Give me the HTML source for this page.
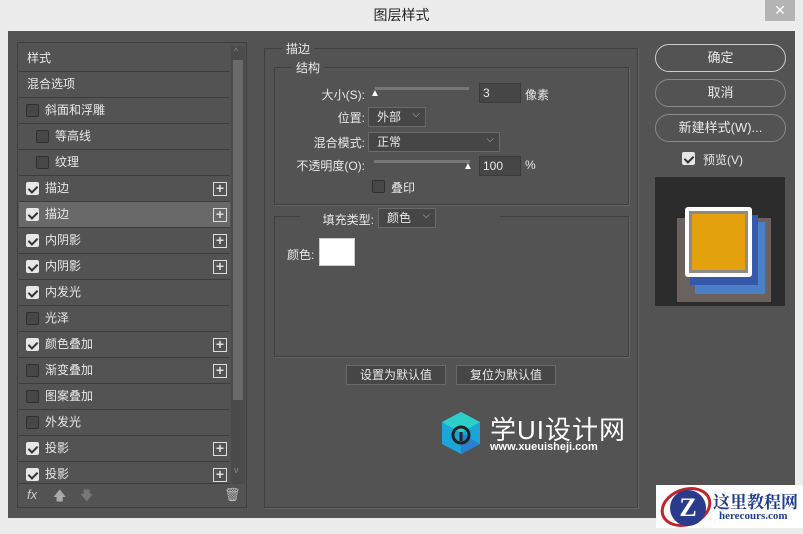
<!DOCTYPE html>
<html><head><meta charset="utf-8"><style>
*{margin:0;padding:0;box-sizing:border-box}
body{width:803px;height:528px;background:#ececec;position:relative;overflow:hidden;font-family:"Liberation Sans","Noto Sans CJK SC",sans-serif;font-size:12px;color:#e8e8e8}
.a{position:absolute}
.title{left:0;top:0;width:803px;height:31px;text-align:center;line-height:31px;font-size:14px;color:#222}
.close{left:765px;top:0;width:30px;height:21px;background:#b4b4b4;color:#fff;text-align:center;line-height:21px;font-size:14px}
.body{left:8px;top:31px;width:787px;height:487px;background:#535353}
.lp{left:17px;top:42px;width:230px;height:466px;border:1px solid #3e3e3e}
.row{position:absolute;left:19px;width:211px;height:26px;border-bottom:1px solid #3c3c3c;line-height:25px;font-size:12px}
.cb{position:absolute;top:6px;width:13px;height:13px;border:1px solid #2f2f2f;background:#474747;border-radius:2px}
.cb.on{background:#e6e6e6;border-color:#e6e6e6}
.cb.on::after{content:"";position:absolute;left:3px;top:1px;width:4px;height:7px;border:solid #333;border-width:0 2px 2px 0;transform:rotate(45deg)}
.plus{position:absolute;right:3px;top:6px;width:14px;height:14px;border:1px solid #ddd;text-align:center;line-height:11px;font-size:14px;font-weight:bold;color:#ddd}
.btn{position:absolute;left:655px;width:131px;height:28px;border:1px solid #8a8a8a;border-radius:14px;text-align:center;line-height:26px;font-size:13px}
.inp{position:absolute;background:#464646;border:1px solid #3a3a3a;height:20px;line-height:18px;padding-left:3px}
.sel{position:absolute;background:#464646;border:1px solid #6a6a6a;height:20px;line-height:18px;padding-left:8px}
.sel::after{content:"⌵";position:absolute;right:5px;top:-2px;font-size:10px;color:#bbb}
.lbl{position:absolute;text-align:right;font-size:12px}
.box{position:absolute;border:1px solid #3f3f3f;box-shadow:1px 1px 0 #666}
.gbtn{position:absolute;height:20px;background:#464646;border:1px solid #6a6a6a;text-align:center;line-height:18px}
</style></head><body>
<div class="a title">图层样式</div>
<div class="a close">✕</div>
<div class="a body"></div>
<div class="a lp"></div>
<div class="a" style="left:231px;top:46px;width:14px;height:438px;background:#4b4b4b"></div>
<div class="a" style="left:233px;top:60px;width:10px;height:340px;background:#6a6a6a"></div>
<div class="a" style="left:234px;top:46px;font-size:9px;color:#888">^</div>
<div class="a" style="left:234px;top:465px;font-size:9px;color:#888">v</div>

<div class="row" style="top:46px"><span style="margin-left:8px">样式</span></div>
<div class="row" style="top:72px"><span style="margin-left:8px">混合选项</span></div>
<div class="row" style="top:98px"><div class="cb" style="left:7px"></div><span style="margin-left:26px">斜面和浮雕</span></div>
<div class="row" style="top:124px"><div class="cb" style="left:17px"></div><span style="margin-left:36px">等高线</span></div>
<div class="row" style="top:150px"><div class="cb" style="left:17px"></div><span style="margin-left:36px">纹理</span></div>
<div class="row" style="top:176px"><div class="cb on" style="left:7px"></div><span style="margin-left:26px">描边</span><div class="plus">+</div></div>
<div class="row" style="top:202px;background:#696969"><div class="cb on" style="left:7px"></div><span style="margin-left:26px">描边</span><div class="plus">+</div></div>
<div class="row" style="top:228px"><div class="cb on" style="left:7px"></div><span style="margin-left:26px">内阴影</span><div class="plus">+</div></div>
<div class="row" style="top:254px"><div class="cb on" style="left:7px"></div><span style="margin-left:26px">内阴影</span><div class="plus">+</div></div>
<div class="row" style="top:280px"><div class="cb on" style="left:7px"></div><span style="margin-left:26px">内发光</span></div>
<div class="row" style="top:306px"><div class="cb" style="left:7px"></div><span style="margin-left:26px">光泽</span></div>
<div class="row" style="top:332px"><div class="cb on" style="left:7px"></div><span style="margin-left:26px">颜色叠加</span><div class="plus">+</div></div>
<div class="row" style="top:358px"><div class="cb" style="left:7px"></div><span style="margin-left:26px">渐变叠加</span><div class="plus">+</div></div>
<div class="row" style="top:384px"><div class="cb" style="left:7px"></div><span style="margin-left:26px">图案叠加</span></div>
<div class="row" style="top:410px"><div class="cb" style="left:7px"></div><span style="margin-left:26px">外发光</span></div>
<div class="row" style="top:436px"><div class="cb on" style="left:7px"></div><span style="margin-left:26px">投影</span><div class="plus">+</div></div>
<div class="row" style="top:462px;height:22px"><div class="cb on" style="left:7px"></div><span style="margin-left:26px">投影</span><div class="plus">+</div></div>
<div class="a" style="left:27px;top:487px;font-style:italic;font-size:13px;color:#ccc">fx</div>
<div class="a" style="left:53px;top:487px;font-size:13px;color:#aaa">🡅</div>
<div class="a" style="left:80px;top:487px;font-size:13px;color:#777">🡇</div>
<div class="a" style="left:224px;top:487px;font-size:13px;color:#bbb">🗑</div>

<div class="box" style="left:264px;top:48px;width:374px;height:460px"></div>
<div class="a" style="left:282px;top:40px;background:#535353;padding:0 4px;font-size:12px">描边</div>
<div class="box" style="left:274px;top:67px;width:355px;height:138px"></div>
<div class="a" style="left:292px;top:59px;background:#535353;padding:0 4px">结构</div>
<div class="lbl" style="left:290px;top:86px;width:75px">大小(S):</div>
<div class="a" style="left:375px;top:87px;width:94px;height:3px;background:#777"></div>
<div class="a" style="left:370px;top:88px;color:#fff;font-size:10px">▲</div>
<div class="inp" style="left:479px;top:83px;width:42px">3</div>
<div class="a" style="left:525px;top:86px">像素</div>
<div class="lbl" style="left:290px;top:109px;width:75px">位置:</div>
<div class="sel" style="left:368px;top:107px;width:58px">外部</div>
<div class="lbl" style="left:290px;top:134px;width:75px">混合模式:</div>
<div class="sel" style="left:368px;top:132px;width:132px">正常</div>
<div class="lbl" style="left:280px;top:157px;width:85px">不透明度(O):</div>
<div class="a" style="left:374px;top:160px;width:96px;height:3px;background:#777"></div>
<div class="a" style="left:463px;top:161px;color:#fff;font-size:10px">▲</div>
<div class="inp" style="left:479px;top:156px;width:42px">100</div>
<div class="a" style="left:525px;top:158px">%</div>
<div class="cb" style="left:372px;top:180px"></div>
<div class="a" style="left:391px;top:179px">叠印</div>

<div class="box" style="left:274px;top:216px;width:355px;height:141px"></div>
<div class="a" style="left:300px;top:208px;width:200px;height:20px;background:#535353"></div>
<div class="lbl" style="left:290px;top:211px;width:84px">填充类型:</div>
<div class="sel" style="left:378px;top:208px;width:58px">颜色</div>
<div class="a" style="left:287px;top:246px">颜色:</div>
<div class="a" style="left:319px;top:238px;width:36px;height:28px;background:#fff;border:1px solid #ccc"></div>

<div class="gbtn" style="left:346px;top:365px;width:100px">设置为默认值</div>
<div class="gbtn" style="left:456px;top:365px;width:100px">复位为默认值</div>

<svg class="a" style="left:438px;top:410px" width="46" height="46" viewBox="0 0 46 46"><polygon points="23,2 42,12 42,34 23,44 4,34 4,12" fill="#1aa6d8"/><polygon points="23,2 42,12 23,23 4,12" fill="#2cd0c8"/><polygon points="23,23 42,34 23,44" fill="#2a7fd0"/><circle cx="23" cy="25" r="8" fill="none" stroke="#222" stroke-width="3"/><rect x="21.5" y="22" width="3" height="9" fill="#222"/></svg>
<div class="a" style="left:490px;top:410px;font-size:26px;color:#fff;letter-spacing:1px">学UI设计网</div>
<div class="a" style="left:490px;top:441px;font-size:11px;color:#fff;font-weight:bold">www.xueuisheji.com</div>

<div class="btn" style="top:44px;border-color:#ccc">确定</div>
<div class="btn" style="top:79px">取消</div>
<div class="btn" style="top:114px">新建样式(W)...</div>
<div class="cb on" style="left:682px;top:152px"></div>
<div class="a" style="left:703px;top:151px;font-size:12px">预览(V)</div>
<div class="a" style="left:655px;top:177px;width:130px;height:129px;background:#2c2c2c"></div>
<div class="a" style="left:677px;top:218px;width:94px;height:84px;background:#6b625e"></div>
<div class="a" style="left:695px;top:222px;width:70px;height:72px;background:#4a80c8"></div>
<div class="a" style="left:690px;top:215px;width:68px;height:70px;background:#3558a8"></div>
<div class="a" style="left:685px;top:207px;width:67px;height:70px;background:#fff;border-radius:3px"></div>
<div class="a" style="left:689px;top:211px;width:59px;height:62px;background:#8f8a85"></div>
<div class="a" style="left:692px;top:214px;width:53px;height:56px;background:#e3a20d"></div>

<div class="a" style="left:656px;top:485px;width:147px;height:43px;background:#fff"></div>
<div class="a" style="left:660px;top:488px;width:52px;height:38px;border:3px solid #c3222a;border-radius:50%;transform:rotate(-20deg)"></div>
<div class="a" style="left:670px;top:490px;width:36px;height:36px;background:#2a3a8c;border-radius:50%;color:#fff;font-weight:bold;font-size:26px;text-align:center;line-height:36px;font-family:'Liberation Serif',serif">Z</div>
<div class="a" style="left:713px;top:488px;font-size:17px;font-weight:bold;color:#1f3d8f;font-family:'Liberation Serif','Noto Serif CJK SC',serif">这里教程网</div>
<div class="a" style="left:719px;top:510px;font-size:11px;font-weight:bold;color:#1f3d8f;font-family:'Liberation Serif',serif">herecours.com</div>
</body></html>
